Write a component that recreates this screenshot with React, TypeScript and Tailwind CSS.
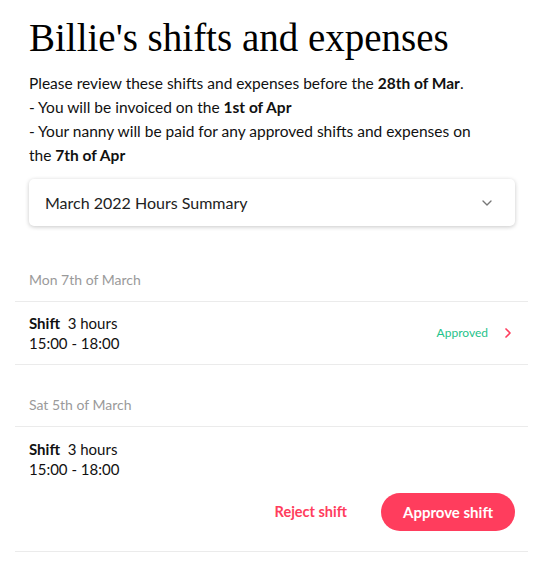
import { ChevronDown, ChevronRight } from "lucide-react"

const sans = "font-['Lato','Noto_Sans',sans-serif]"

function DateHeader({ label }: { label: string }) {
  return (
    <div className="px-[14px] pb-[11px] text-[14px] leading-5 text-[#9a9a9a]">{label}</div>
  )
}

function ShiftInfo() {
  return (
    <div className="text-[15px] leading-5 text-[#111]">
      <div>
        <span className="font-bold">Shift</span>&nbsp; 3 hours
      </div>
      <div>15:00 - 18:00</div>
    </div>
  )
}

export default function App() {
  return (
    <div className={`w-[558px] h-[570px] bg-white ${sans}`}>
      <div className="px-[29px] pt-[15px]">
        <h1 className="font-['Liberation_Serif',serif] text-[39px] leading-[46px] text-black">
          Billie's shifts and expenses
        </h1>
        <div className="mt-[10px] max-w-[460px] text-[15.5px] leading-6 text-[#111]">
          <p>
            Please review these shifts and expenses before the <b>28th of Mar</b>.
          </p>
          <p>
            - You will be invoiced on the <b>1st of Apr</b>
          </p>
          <p>
            - Your nanny will be paid for any approved shifts and expenses on the{" "}
            <b>7th of Apr</b>
          </p>
        </div>
        <button className="mt-[12px] flex h-[47px] w-[486px] items-center justify-between rounded-[5px] bg-white pl-4 pr-[20px] text-[16px] text-[#222] shadow-[0_1px_4px_rgba(0,0,0,0.22)]">
          <span>March 2022 Hours Summary</span>
          <ChevronDown className="h-4 w-4 text-[#777]" strokeWidth={2} />
        </button>
      </div>

      <div className="mx-[15px] mt-[44px] w-[513px]">
        <DateHeader label="Mon 7th of March" />
        <div className="flex items-center justify-between border-y border-[#ebebeb] py-[11px] pl-[14px] pr-[12px]">
          <ShiftInfo />
          <div className="flex items-center gap-[12px]">
            <span className="text-[12px] text-[#1fc28a]">Approved</span>
            <ChevronRight className="h-4 w-4 text-[#ff3d5d]" strokeWidth={2.5} />
          </div>
        </div>

        <div className="pt-[30px]">
          <DateHeader label="Sat 5th of March" />
          <div className="border-y border-[#ebebeb] pb-[20px] pl-[14px] pr-[13px] pt-[12px]">
            <ShiftInfo />
            <div className="mt-[14px] flex items-center justify-end gap-[34px]">
              <button className="text-[14.5px] font-bold text-[#ff3d5d]">Reject shift</button>
              <button className="h-[38px] rounded-full bg-[#ff3d5d] px-[22px] text-[15px] font-bold text-white">
                Approve shift
              </button>
            </div>
          </div>
        </div>
      </div>
    </div>
  )
}
